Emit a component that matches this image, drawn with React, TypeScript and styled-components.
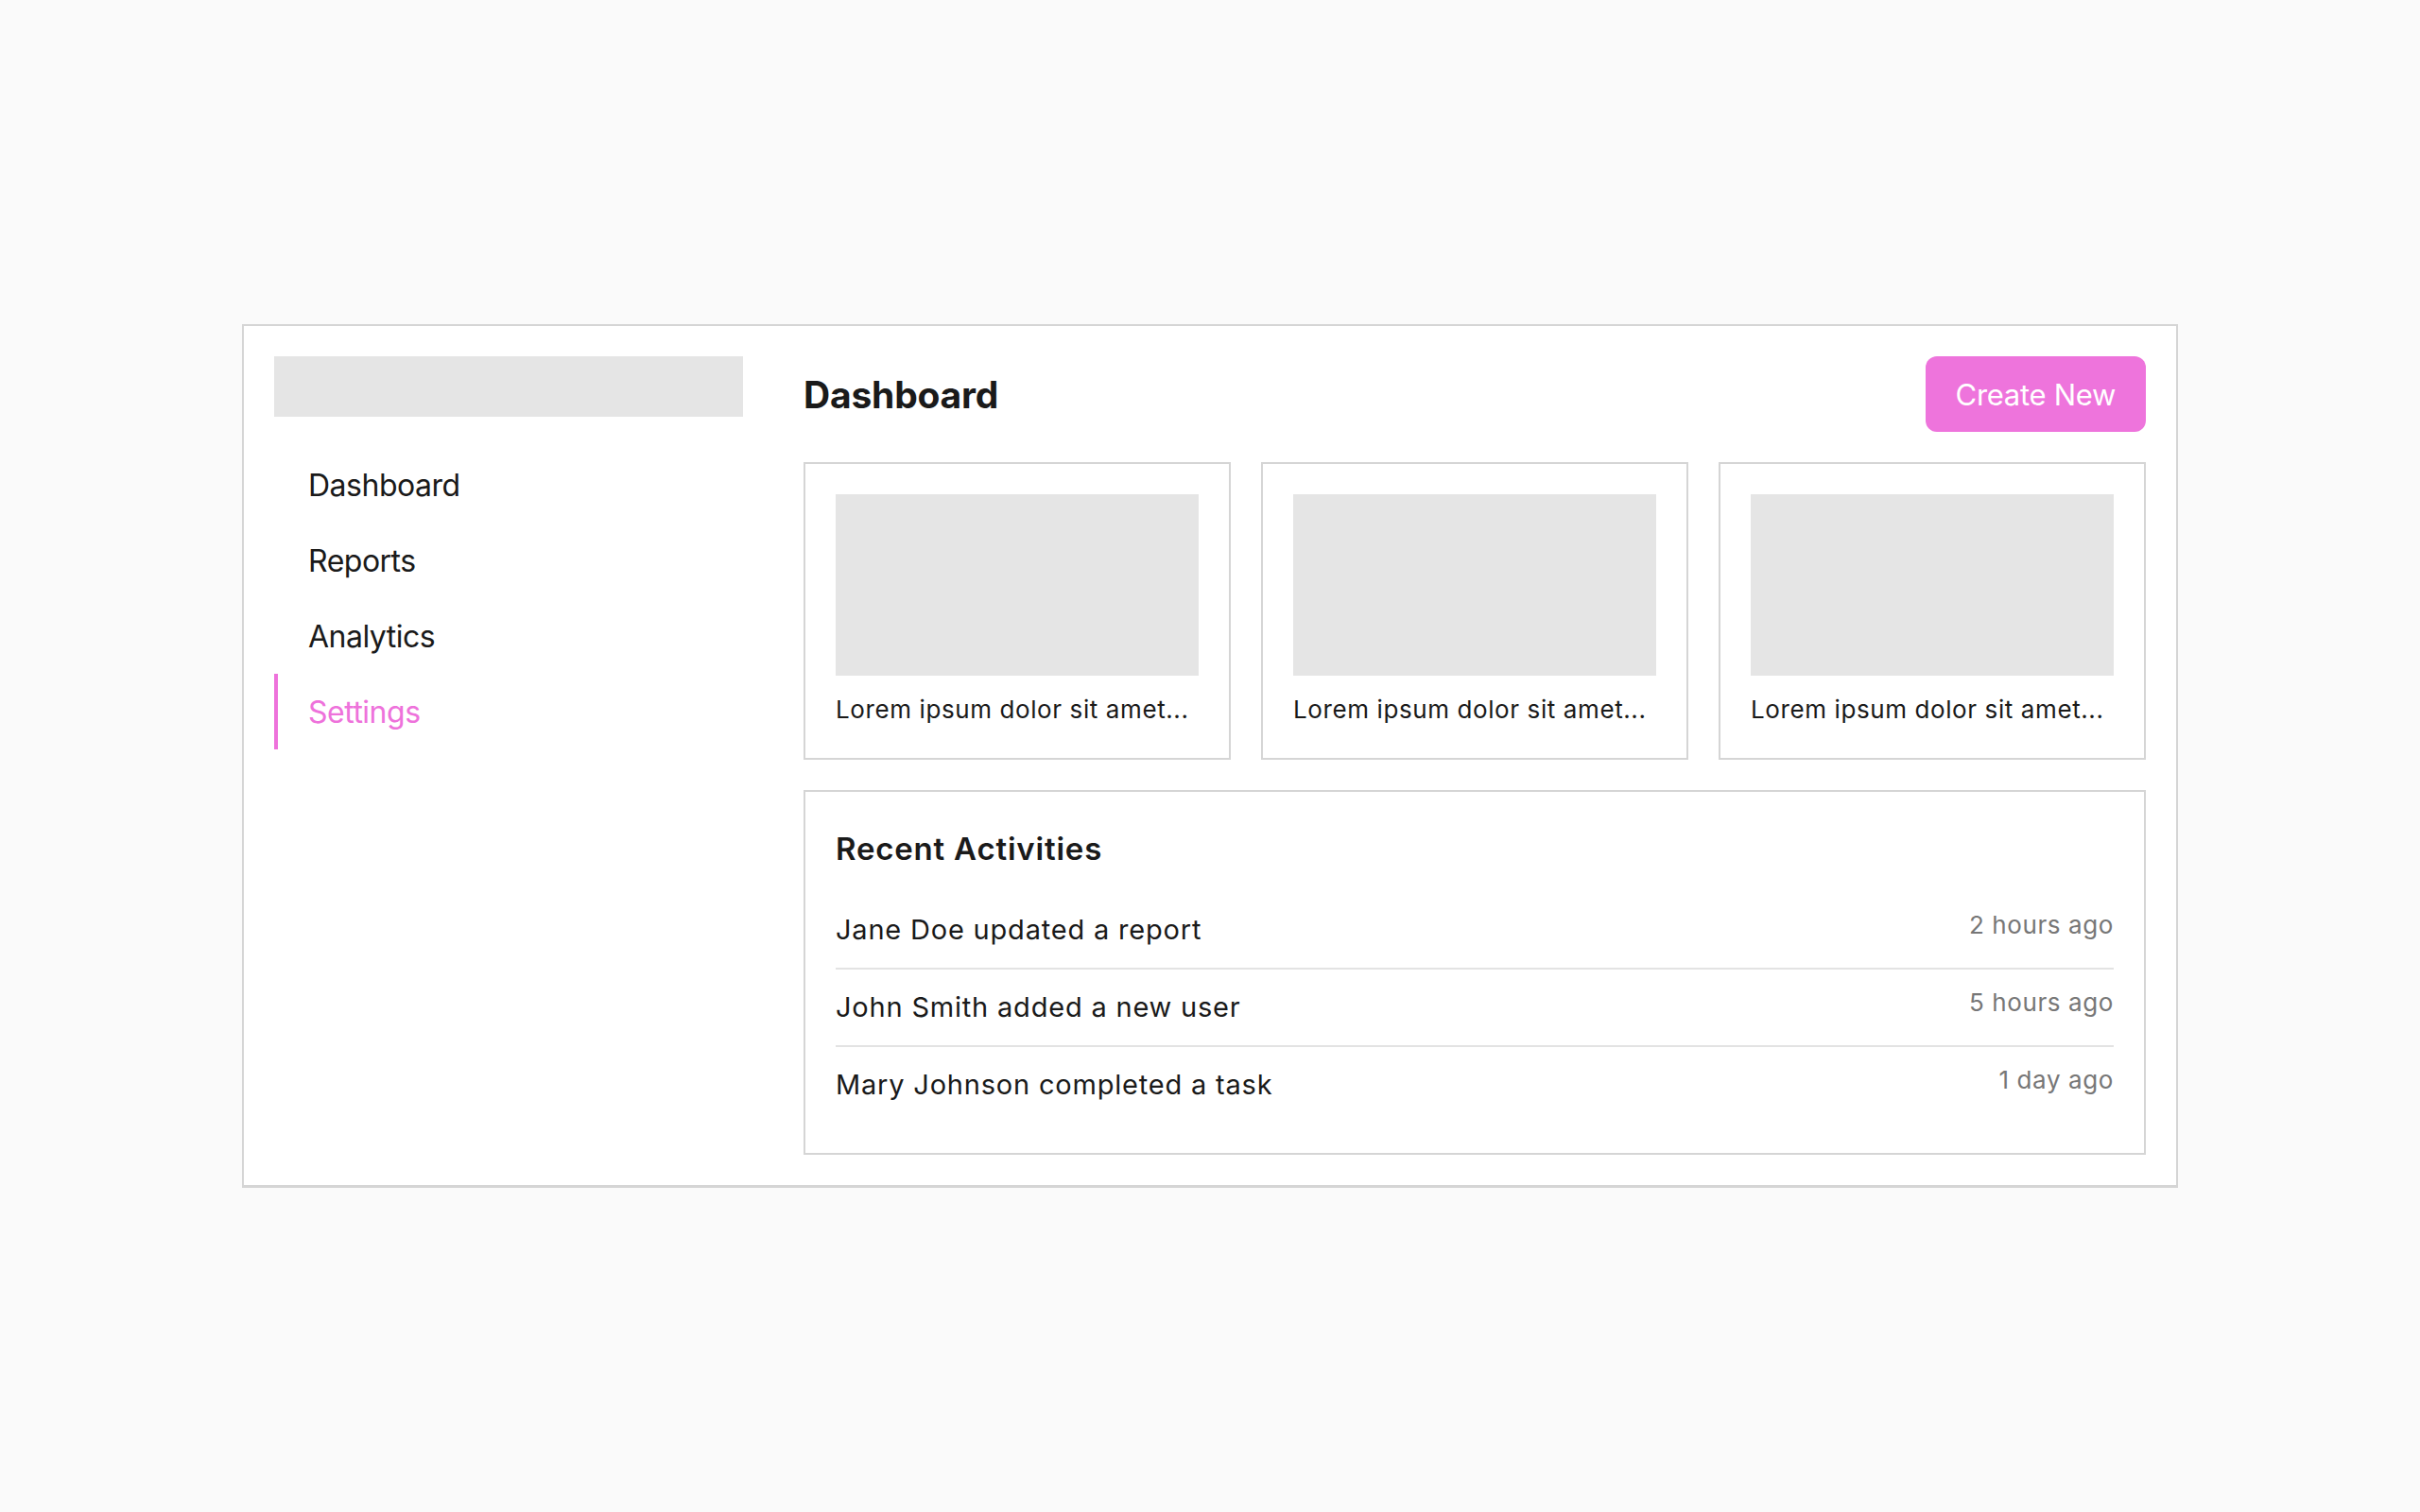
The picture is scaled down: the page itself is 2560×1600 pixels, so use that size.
import React from "react";
import styled, { createGlobalStyle } from "styled-components";

const GlobalStyle = createGlobalStyle`
  html, body {
    margin: 0;
    padding: 0;
    background: #fafafa;
    font-family: Inter, "Noto Sans", "Liberation Sans", sans-serif;
    color: #1a1a1a;
  }
  * { box-sizing: border-box; }
`;

const Page = styled.div`
  min-height: 100vh;
  display: flex;
  align-items: center;
  justify-content: center;
`;

const Shell = styled.div`
  width: 2048px;
  display: flex;
  align-items: flex-start;
  gap: 64px;
  padding: 32px;
  background: #ffffff;
  border: 2px solid #d5d5d5;
  border-bottom-width: 3px;
`;

const Sidebar = styled.aside`
  width: 496px;
  flex-shrink: 0;
  display: flex;
  flex-direction: column;
`;

const LogoBlock = styled.div`
  height: 64px;
  background: #e5e5e5;
`;

const Nav = styled.nav`
  margin-top: 32px;
  display: flex;
  flex-direction: column;
`;

const NavItem = styled.a<{ $active?: boolean }>`
  height: 80px;
  display: flex;
  align-items: center;
  padding-left: 32px;
  border-left: 4px solid ${(p) => (p.$active ? "#ee72db" : "transparent")};
  color: ${(p) => (p.$active ? "#ee72db" : "#1a1a1a")};
  font-size: 32px;
  letter-spacing: -0.5px;
  text-decoration: none;
  cursor: pointer;
`;

const Main = styled.main`
  flex: 1;
  min-width: 0;
  display: flex;
  flex-direction: column;
  gap: 32px;
`;

const Header = styled.header`
  display: flex;
  align-items: center;
  justify-content: space-between;
`;

const Title = styled.h1`
  margin: 0;
  font-size: 39px;
  font-weight: 700;
  letter-spacing: -0.2px;
  color: #1a1a1a;
`;

const PrimaryButton = styled.button`
  height: 80px;
  padding: 0 32px;
  border: none;
  border-radius: 12px;
  background: #ee74dc;
  color: #ffffff;
  font-family: inherit;
  font-size: 31px;
  letter-spacing: -0.3px;
  cursor: pointer;
`;

const CardGrid = styled.div`
  display: grid;
  grid-template-columns: repeat(3, 1fr);
  gap: 32px;
`;

const Card = styled.div`
  border: 2px solid #d5d5d5;
  padding: 32px;
  background: #fff;
`;

const CardImage = styled.div`
  height: 192px;
  background: #e5e5e5;
`;

const CardText = styled.p`
  margin: 16px 0 0;
  font-size: 26px;
  line-height: 39px;
  letter-spacing: 0.6px;
  color: #1a1a1a;
  white-space: nowrap;
  overflow: hidden;
`;

const Panel = styled.section`
  border: 2px solid #d5d5d5;
  padding: 32px;
`;

const PanelTitle = styled.h2`
  margin: 0 0 18px;
  font-size: 33px;
  line-height: 56px;
  font-weight: 600;
  letter-spacing: 0.8px;
  color: #1a1a1a;
`;

const ActivityList = styled.ul`
  list-style: none;
  margin: 0;
  padding: 0;
`;

const ActivityRow = styled.li`
  display: flex;
  justify-content: space-between;
  align-items: flex-start;
  padding: 18px 0;
  border-bottom: 2px solid #e3e3e3;
  &:last-child {
    border-bottom: none;
  }
`;

const ActivityText = styled.span`
  font-size: 29px;
  line-height: 44px;
  letter-spacing: 0.8px;
  color: #1a1a1a;
`;

const ActivityTime = styled.span`
  font-size: 26px;
  line-height: 33px;
  letter-spacing: 0.6px;
  color: #777777;
`;

const navItems = ["Dashboard", "Reports", "Analytics", "Settings"];
const activities = [
  { text: "Jane Doe updated a report", time: "2 hours ago" },
  { text: "John Smith added a new user", time: "5 hours ago" },
  { text: "Mary Johnson completed a task", time: "1 day ago" },
];

export default function App() {
  return (
    <>
      <GlobalStyle />
      <Page>
        <Shell>
          <Sidebar>
            <LogoBlock />
            <Nav>
              {navItems.map((item) => (
                <NavItem key={item} $active={item === "Settings"}>
                  {item}
                </NavItem>
              ))}
            </Nav>
          </Sidebar>
          <Main>
            <Header>
              <Title>Dashboard</Title>
              <PrimaryButton>Create New</PrimaryButton>
            </Header>
            <CardGrid>
              {[0, 1, 2].map((i) => (
                <Card key={i}>
                  <CardImage />
                  <CardText>Lorem ipsum dolor sit amet...</CardText>
                </Card>
              ))}
            </CardGrid>
            <Panel>
              <PanelTitle>Recent Activities</PanelTitle>
              <ActivityList>
                {activities.map((a) => (
                  <ActivityRow key={a.text}>
                    <ActivityText>{a.text}</ActivityText>
                    <ActivityTime>{a.time}</ActivityTime>
                  </ActivityRow>
                ))}
              </ActivityList>
            </Panel>
          </Main>
        </Shell>
      </Page>
    </>
  );
}
